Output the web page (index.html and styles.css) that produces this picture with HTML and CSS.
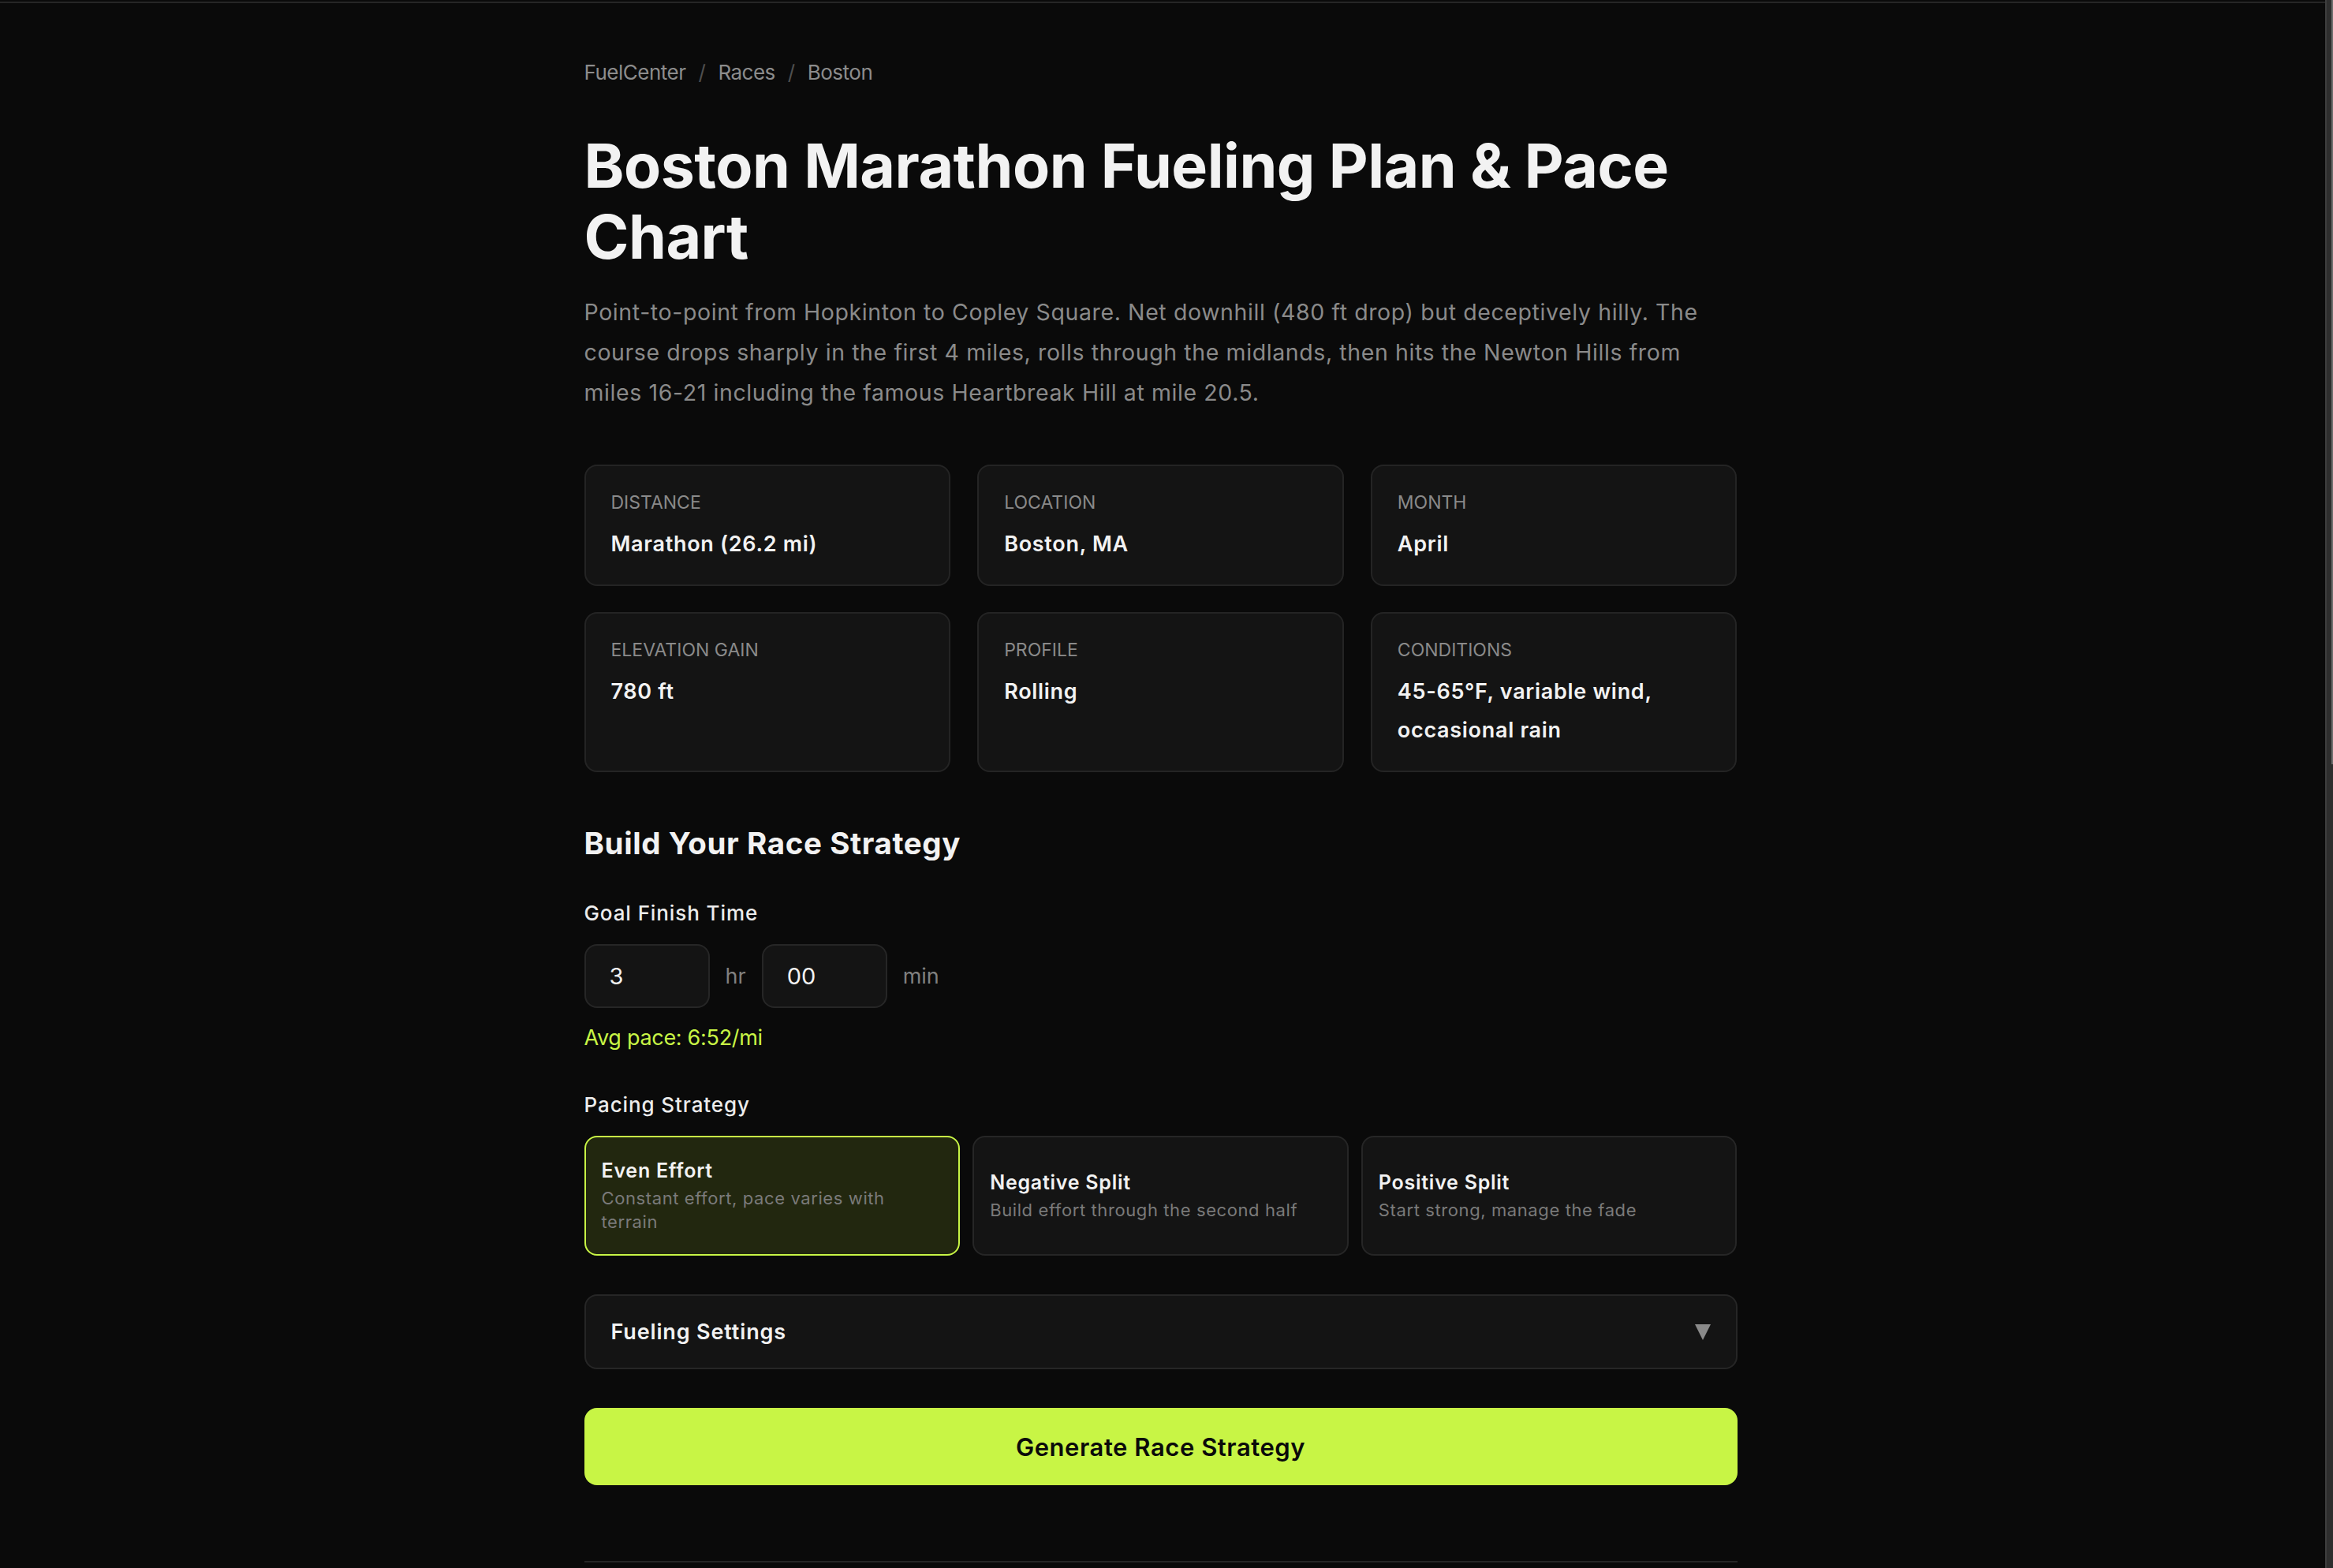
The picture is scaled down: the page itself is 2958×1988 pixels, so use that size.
FILE: index.html
```html
<!DOCTYPE html>
<html lang="en">
<head>
    <meta charset="UTF-8">
    <meta name="viewport" content="width=device-width, initial-scale=1.0">
    <title>Boston Marathon Fueling Plan &amp; Pace Chart - FuelCenter</title>
    <link rel="stylesheet" href="styles.css">
</head>
<body>
    <div class="topline"></div>
    <div class="scroll-gutter"></div>

    <main class="page">
        <nav class="crumbs">
            <a href="#">FuelCenter</a><span class="sep">/</span><a href="#">Races</a><span class="sep">/</span><span>Boston</span>
        </nav>

        <h1 class="title">Boston Marathon Fueling Plan &amp; Pace Chart</h1>
        <p class="intro">Point-to-point from Hopkinton to Copley Square. Net downhill (480 ft drop) but deceptively hilly. The course drops sharply in the first 4 miles, rolls through the midlands, then hits the Newton Hills from miles 16-21 including the famous Heartbreak Hill at mile 20.5.</p>

        <!-- Race facts -->
        <div class="facts">
            <div class="fact">
                <div class="fact-label">Distance</div>
                <div class="fact-value">Marathon (26.2 mi)</div>
            </div>
            <div class="fact">
                <div class="fact-label">Location</div>
                <div class="fact-value">Boston, MA</div>
            </div>
            <div class="fact">
                <div class="fact-label">Month</div>
                <div class="fact-value">April</div>
            </div>
            <div class="fact">
                <div class="fact-label">Elevation Gain</div>
                <div class="fact-value">780 ft</div>
            </div>
            <div class="fact">
                <div class="fact-label">Profile</div>
                <div class="fact-value">Rolling</div>
            </div>
            <div class="fact">
                <div class="fact-label">Conditions</div>
                <div class="fact-value">45-65°F, variable wind, occasional rain</div>
            </div>
        </div>

        <!-- Strategy builder -->
        <section class="builder">
            <h2 class="builder-title">Build Your Race Strategy</h2>

            <div class="field field-goal">
                <label class="field-label" for="hours">Goal Finish Time</label>
                <div class="time-row">
                    <input class="time-input" type="text" id="hours" value="3">
                    <span class="unit">hr</span>
                    <input class="time-input" type="text" id="minutes" value="00">
                    <span class="unit">min</span>
                </div>
                <div class="pace">Avg pace: 6:52/mi</div>
            </div>

            <div class="field field-pacing">
                <div class="field-label">Pacing Strategy</div>
                <div class="strategies">
                    <button class="strategy active" type="button">
                        <span class="strategy-name">Even Effort</span>
                        <span class="strategy-note">Constant effort, pace varies with terrain</span>
                    </button>
                    <button class="strategy" type="button">
                        <span class="strategy-name">Negative Split</span>
                        <span class="strategy-note">Build effort through the second half</span>
                    </button>
                    <button class="strategy" type="button">
                        <span class="strategy-name">Positive Split</span>
                        <span class="strategy-note">Start strong, manage the fade</span>
                    </button>
                </div>
            </div>

            <details class="fueling">
                <summary><span>Fueling Settings</span>
                    <svg class="caret" viewBox="0 0 20 20"><polygon points="0,0 20,0 10,20"/></svg>
                </summary>
            </details>

            <button class="generate" type="button">Generate Race Strategy</button>
        </section>

        <section class="results"></section>
    </main>
</body>
</html>
```

FILE: styles.css
```css
* {
    margin: 0;
    padding: 0;
    box-sizing: border-box;
}

html {
    background: #0a0a0a;
}

body {
    font-family: Inter, "Noto Sans", sans-serif;
    color: #f2f2f2;
    background: #0a0a0a;
    padding-right: 15px;
}

/* drawn scrollbar on the right edge */
.scroll-gutter {
    position: fixed;
    top: 0;
    right: 0;
    bottom: 0;
    width: 10px;
    border-left: 2px solid #3d3d3d;
    background: linear-gradient(#6e6e6e, #6e6e6e) right top / 2px 969px no-repeat, #2e2e2e;
}

.topline {
    height: 2px;
    margin-top: 2px;
    margin-right: -5px;
    background: #262626;
}

.page {
    max-width: 1462px;
    margin: 0 auto;
    padding-top: 68px;
}

.crumbs {
    font-size: 26px;
    line-height: 40px;
    letter-spacing: -0.5px;
    color: #8c8c8c;
    margin-bottom: 53px;
}

.crumbs a {
    color: #8c8c8c;
    text-decoration: none;
}

.crumbs .sep {
    color: #4f4f4f;
    margin: 0 16px;
}

.title {
    font-size: 77px;
    line-height: 90px;
    font-weight: 700;
    letter-spacing: -0.5px;
    color: #f2f2f2;
}

.intro {
    margin-top: 25px;
    font-size: 28.5px;
    line-height: 51px;
    letter-spacing: 0.6px;
    color: #8a8a8a;
}

.facts {
    margin-top: 66px;
    display: grid;
    grid-template-columns: repeat(3, 1fr);
    column-gap: 34px;
    row-gap: 33px;
}

.fact {
    background: #141414;
    border: 2px solid #242424;
    border-radius: 16px;
    padding: 31px 32px 27px;
}

.fact-label {
    font-size: 23px;
    line-height: 30px;
    text-transform: uppercase;
    color: #8a8a8a;
    margin-bottom: 13px;
}

.fact-value {
    font-size: 27px;
    line-height: 49px;
    font-weight: 600;
    letter-spacing: 0.7px;
    color: #f2f2f2;
}

.builder-title {
    margin-top: 64px;
    font-size: 38.5px;
    line-height: 52px;
    font-weight: 700;
    letter-spacing: 0.6px;
}

.field-label {
    display: block;
    font-size: 26px;
    line-height: 40px;
    font-weight: 500;
    letter-spacing: 0.9px;
    color: #ececec;
    margin-bottom: 19px;
}

.field-goal {
    margin-top: 43px;
}

.field-pacing {
    margin-top: 45px;
}

.time-row {
    display: flex;
    align-items: center;
    gap: 20px;
}

.time-input {
    width: 159px;
    height: 81px;
    padding: 0 30px;
    background: #141414;
    border: 2px solid #262626;
    border-radius: 16px;
    font-family: inherit;
    font-size: 29px;
    color: #f2f2f2;
    outline: none;
}

.unit {
    font-size: 27px;
    color: #808080;
}

.pace {
    margin-top: 18px;
    font-size: 27px;
    line-height: 40px;
    letter-spacing: -0.3px;
    color: #c8f545;
}

.strategies {
    display: grid;
    grid-template-columns: repeat(3, 1fr);
    gap: 16px;
}

.strategy {
    display: flex;
    flex-direction: column;
    justify-content: center;
    padding: 22px 20px 26px;
    background: #141414;
    border: 2px solid #262626;
    border-radius: 16px;
    font-family: inherit;
    color: inherit;
    text-align: left;
    cursor: pointer;
}

.strategy.active {
    background: #22270f;
    border-color: #c8f545;
}

.strategy-name {
    font-size: 25px;
    line-height: 40px;
    font-weight: 600;
    letter-spacing: 0.75px;
    color: #f2f2f2;
}

.strategy-note {
    font-size: 22px;
    line-height: 30px;
    letter-spacing: 0.6px;
    color: #7a7a7a;
}

.fueling {
    margin-top: 49px;
    background: #141414;
    border: 2px solid #262626;
    border-radius: 16px;
}

.fueling summary {
    list-style: none;
    display: flex;
    align-items: center;
    justify-content: space-between;
    height: 91px;
    padding: 0 32px;
    font-size: 27px;
    font-weight: 600;
    letter-spacing: 0.85px;
    cursor: pointer;
}

.fueling summary::-webkit-details-marker {
    display: none;
}

.caret {
    width: 20px;
    height: 20px;
    fill: #8a8a8a;
}

.generate {
    display: block;
    width: 100%;
    height: 98px;
    margin-top: 49px;
    background: #c8f545;
    border: none;
    border-radius: 16px;
    font-family: inherit;
    font-size: 31px;
    font-weight: 600;
    letter-spacing: 0.55px;
    color: #0a0a0a;
    cursor: pointer;
}

.results {
    margin-top: 96px;
    border-top: 2px solid #262626;
    min-height: 2098px;
}
```
